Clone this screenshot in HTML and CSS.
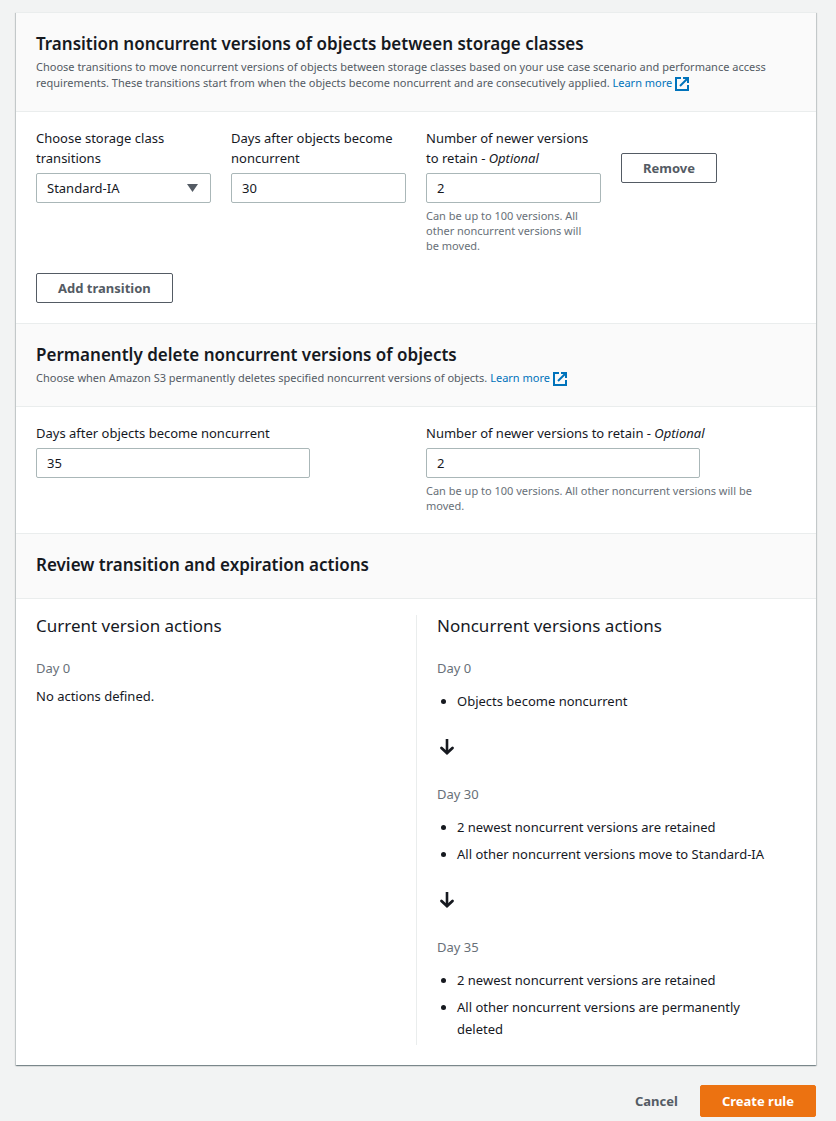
FILE: index.html
```html
<!DOCTYPE html>
<html lang="en">
<head>
<meta charset="utf-8">
<meta name="viewport" content="width=device-width, initial-scale=1">
<title>Create lifecycle rule</title>
<link rel="stylesheet" href="styles.css">
</head>
<body>
<svg class="sprite" aria-hidden="true">
  <symbol id="external" viewBox="0 0 14 14">
    <path d="M6 1H1v12h12V8" fill="none" stroke="currentColor" stroke-width="2"/>
    <path d="M12 2L5 9" fill="none" stroke="currentColor" stroke-width="2"/>
    <path d="M8 0h6v6h-2V3.500L10.500 2H8z" fill="currentColor"/>
  </symbol>
  <symbol id="arrow-down" viewBox="0 0 16 16">
    <path d="M8 0v14" fill="none" stroke="currentColor" stroke-width="2.600"/>
    <path d="M2.500 9L8 14l5.500-5" fill="none" stroke="currentColor" stroke-width="2.800" stroke-linecap="round"/>
  </symbol>
</svg>
<form class="page">
  <main class="card">
    <section>
      <header class="section-header">
        <h2>Transition noncurrent versions of objects between storage classes</h2>
        <p>Choose transitions to move noncurrent versions of objects between storage classes based on your use case scenario and performance access requirements. These transitions start from when the objects become noncurrent and are consecutively applied. <a href="#">Learn more <svg class="external"><use href="#external"/></svg></a></p>
      </header>
      <div class="section-body">
        <div class="grid four">
          <div class="field">
            <label for="storage-class">Choose storage class transitions</label>
            <div class="select">
              <select id="storage-class"><option>Standard-IA</option></select>
              <svg class="caret" viewBox="0 0 11 8" aria-hidden="true"><path d="M0 0h11L5.500 8z" fill="currentColor"/></svg>
            </div>
          </div>
          <div class="field">
            <label for="transition-days">Days after objects become noncurrent</label>
            <input id="transition-days" type="text" value="30">
          </div>
          <div class="field">
            <label for="transition-retain">Number of newer versions to retain - <i>Optional</i></label>
            <input id="transition-retain" type="text" value="2">
            <p class="hint">Can be up to 100 versions. All other noncurrent versions will be moved.</p>
          </div>
          <div class="remove"><button type="button" class="button">Remove</button></div>
        </div>
        <button type="button" class="button add">Add transition</button>
      </div>
    </section>
    <section>
      <header class="section-header">
        <h2>Permanently delete noncurrent versions of objects</h2>
        <p>Choose when Amazon S3 permanently deletes specified noncurrent versions of objects. <a href="#">Learn more <svg class="external"><use href="#external"/></svg></a></p>
      </header>
      <div class="section-body">
        <div class="grid two">
          <div class="field wide">
            <label for="delete-days">Days after objects become noncurrent</label>
            <input id="delete-days" type="text" value="35">
          </div>
          <div class="field wide">
            <label for="delete-retain">Number of newer versions to retain - <i>Optional</i></label>
            <input id="delete-retain" type="text" value="2">
            <p class="hint">Can be up to 100 versions. All other noncurrent versions will be moved.</p>
          </div>
        </div>
      </div>
    </section>
    <section>
      <header class="section-header">
        <h2>Review transition and expiration actions</h2>
      </header>
      <div class="section-body review">
        <div class="column">
          <h3>Current version actions</h3>
          <h4>Day 0</h4>
          <p class="none">No actions defined.</p>
        </div>
        <div class="column">
          <h3>Noncurrent versions actions</h3>
          <h4>Day 0</h4>
          <ul><li>Objects become noncurrent</li></ul>
          <svg class="arrow" aria-hidden="true"><use href="#arrow-down"/></svg>
          <h4>Day 30</h4>
          <ul>
            <li>2 newest noncurrent versions are retained</li>
            <li>All other noncurrent versions move to Standard-IA</li>
          </ul>
          <svg class="arrow" aria-hidden="true"><use href="#arrow-down"/></svg>
          <h4>Day 35</h4>
          <ul>
            <li>2 newest noncurrent versions are retained</li>
            <li>All other noncurrent versions are permanently deleted</li>
          </ul>
        </div>
      </div>
    </section>
  </main>
  <footer class="actions">
    <button type="button" class="button plain">Cancel</button>
    <button type="submit" class="button primary">Create rule</button>
  </footer>
</form>
</body>
</html>
```
FILE: styles.css
```css
* { box-sizing: border-box; }
body {
  margin: 0;
  background: #f2f3f3;
  color: #16191f;
  font: 13px/22px "Noto Sans", "Open Sans", sans-serif;
}
h2, h3, h4, p, ul { margin: 0; }
.sprite { position: absolute; width: 0; height: 0; }
.page { padding: 12px 20px 4px 16px; }
.card {
  background: #fff;
  border-top: 1px solid #eaeded;
  box-shadow: 0 1px 1px 0 rgba(0, 28, 36, .3), 1px 1px 1px 0 rgba(0, 28, 36, .15), -1px 1px 1px 0 rgba(0, 28, 36, .15);
}
.section-header {
  padding: 20px;
  background: #fafafa;
  border-bottom: 1px solid #eaeded;
}
section + section .section-header { border-top: 1px solid #eaeded; }
h2 { font-size: 17px; font-weight: 600; line-height: 22px; }
h2:only-child { margin-bottom: 2px; }
.section-header p { margin-top: 4px; color: #545b64; font-size: 11px; line-height: 16px; }
a { color: #0073bb; text-decoration: none; white-space: nowrap; }
.external { width: 14px; height: 14px; vertical-align: middle; }
.section-body { padding: 16px 20px 20px; }
.grid { display: grid; gap: 20px; }
.four { grid-template-columns: repeat(4, 1fr); }
.two { grid-template-columns: repeat(2, 1fr); }
.field label { display: block; margin-bottom: 5px; line-height: 20px; }
.wide input { width: 74%; }
input, select {
  display: block;
  width: 100%;
  height: 30px;
  padding: 0 10px;
  border: 1px solid #aab7b8;
  border-radius: 2px;
  background: #fff;
  color: #16191f;
  font: inherit;
}
select { appearance: none; }
.select { display: grid; align-items: center; }
.select > * { grid-area: 1 / 1; }
.caret { width: 11px; height: 8px; margin-right: 13px; justify-self: end; color: #545b64; pointer-events: none; }
.hint { margin-top: 5px; padding-right: 10px; color: #687078; font-size: 11px; line-height: 15px; }
.remove { padding-top: 25px; }
.button {
  height: 30px;
  padding: 0 21px;
  border: 1px solid #545b64;
  border-radius: 2px;
  background: #fff;
  color: #545b64;
  font: inherit;
  font-weight: 700;
}
.add { display: block; margin-top: 20px; }
.review { display: grid; grid-template-columns: repeat(2, 1fr); }
.column + .column { padding: 0 20px 5px; border-left: 1px solid #eaeded; }
h3 { font-size: 17px; font-weight: 400; line-height: 22px; }
h4 { margin-top: 20px; color: #687078; font-size: 13px; font-weight: 400; }
.none { margin-top: 6px; }
ul { display: grid; gap: 5px; margin-top: 11px; padding-left: 20px; }
.arrow { display: block; width: 16px; height: 16px; margin: 27px 2px 28px; }
.arrow + h4 { margin-top: 0; }
.actions { display: flex; justify-content: flex-end; margin-top: 20px; }
.actions .button { height: 32px; }
.plain { border-color: transparent; background: transparent; }
.primary { border-color: #ec7211; background: #ec7211; color: #fff; }
```
